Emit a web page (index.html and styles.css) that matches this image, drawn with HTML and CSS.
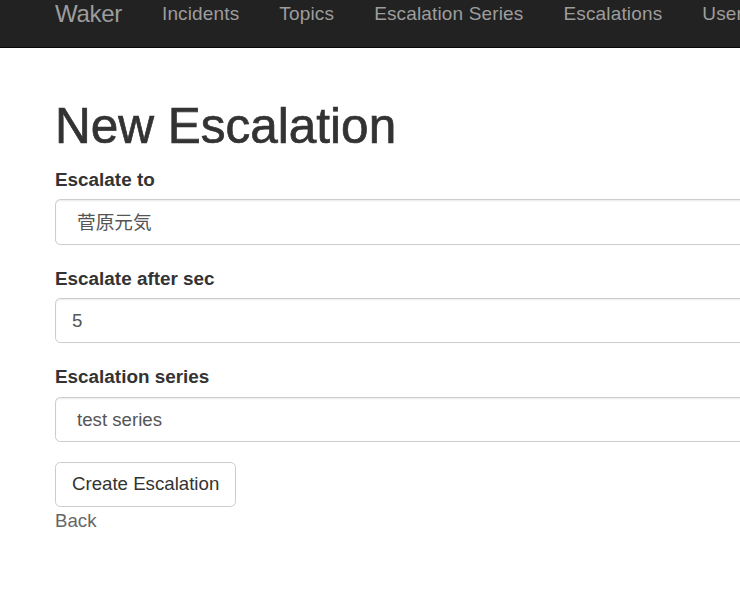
FILE: index.html
```html
<!DOCTYPE html>
<html lang="en">
<head>
<meta charset="utf-8">
<title>Waker - New Escalation</title>
<link rel="stylesheet" href="styles.css">
</head>
<body>
<nav class="navbar">
  <a class="brand" href="#">Waker</a>
  <ul class="nav">
    <li><a href="#">Incidents</a></li>
    <li><a href="#">Topics</a></li>
    <li><a href="#">Escalation Series</a></li>
    <li><a href="#">Escalations</a></li>
    <li><a href="#">Users</a></li>
  </ul>
</nav>
<main class="container">
  <h1 class="title">New Escalation</h1>
  <form class="form">
    <div class="form-group">
      <label class="label" for="to">Escalate to</label>
      <select class="control select" id="to"><option>菅原元気</option></select>
    </div>
    <div class="form-group">
      <label class="label" for="sec">Escalate after sec</label>
      <input class="control" id="sec" type="text" value="5">
    </div>
    <div class="form-group">
      <label class="label" for="series">Escalation series</label>
      <select class="control select" id="series"><option>test series</option></select>
    </div>
    <button class="btn" type="button">Create Escalation</button>
  </form>
  <a class="back" href="#">Back</a>
</main>
</body>
</html>
```
FILE: styles.css
```css
html, body {
  margin: 0;
  padding: 0;
  overflow: hidden;
  background: #fff;
}
body {
  font-family: "Liberation Sans", Arial, "Noto Sans CJK JP", sans-serif;
  font-size: 18.67px;
  line-height: 26.67px;
  color: #333;
  width: 1300px;
}
.navbar {
  display: flex;
  align-items: flex-start;
  height: 47px;
  background: #222;
  border-bottom: 1px solid #080808;
  padding-left: 35px;
}
.brand {
  display: block;
  padding: 0 20px;
  font-size: 24px;
  line-height: 28px;
  color: #9d9d9d;
  text-decoration: none;
  letter-spacing: -0.3px;
}
.nav {
  display: flex;
  list-style: none;
  margin: 0;
  padding: 0;
}
.nav a {
  display: block;
  padding: 0 20px;
  font-size: 19px;
  line-height: 28px;
  letter-spacing: 0.15px;
  color: #9d9d9d;
  text-decoration: none;
}
.container {
  padding: 52px 20px 0 55px;
  width: 1000px;
}
.title {
  margin: 0 0 13.33px;
  font-size: 49.5px;
  line-height: 52.8px;
  font-weight: normal;
  -webkit-text-stroke: 0.7px #333;
  color: #333;
}
.form-group {
  margin-bottom: 20px;
}
.label {
  display: block;
  font-weight: bold;
  font-size: 18.9px;
  margin-bottom: 6.67px;
  line-height: 26.67px;
  position: relative;
  top: 1px;
}
.control {
  display: block;
  box-sizing: border-box;
  width: 100%;
  height: 45.33px;
  padding: 8px 16px;
  font-family: "Liberation Sans", Arial, "Noto Sans CJK JP", sans-serif;
  font-size: 18.67px;
  color: #555;
  background: #fff;
  border: 1px solid #ccc;
  border-radius: 5.33px;
  box-shadow: inset 0 1.33px 1.33px rgba(0, 0, 0, 0.075);
  outline: none;
}
.select {
  -webkit-appearance: none;
  appearance: none;
  padding-left: 21px;
}
.btn {
  display: inline-block;
  box-sizing: border-box;
  height: 45px;
  padding: 8px 16px;
  font-family: "Liberation Sans", Arial, sans-serif;
  font-size: 18.67px;
  line-height: 26.67px;
  color: #333;
  background: #fff;
  border: 1px solid #ccc;
  border-radius: 5.33px;
}
.back {
  display: block;
  color: #666;
  text-decoration: none;
  margin-top: 1px;
}
```
